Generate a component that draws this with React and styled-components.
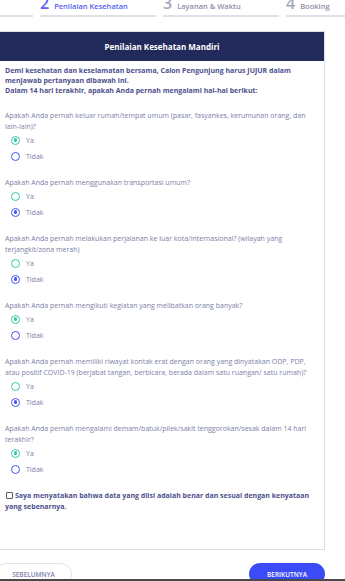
import React from "react";
import styled, { createGlobalStyle } from "styled-components";

const GlobalStyle = createGlobalStyle`
  html, body {
    margin: 0;
    padding: 0;
    background: #ffffff;
    overflow: hidden;
    font-family: "Open Sans", "Liberation Sans", sans-serif;
  }
`;

const questions = [
    {
        text: "Apakah Anda pernah keluar rumah/tempat umum (pasar, fasyankes, kerumunan orang, dan lain-lain)?",
        answer: "ya",
    },
    {
        text: "Apakah Anda pernah menggunakan transportasi umum?",
        answer: "tidak",
    },
    {
        text: "Apakah Anda pernah melakukan perjalanan ke luar kota/internasional? (wilayah yang terjangkit/zona merah)",
        answer: "tidak",
    },
    {
        text: "Apakah Anda pernah mengikuti kegiatan yang melibatkan orang banyak?",
        answer: "ya",
    },
    {
        text: "Apakah Anda pernah memiliki riwayat kontak erat dengan orang yang dinyatakan ODP, PDP, atau positif COVID-19 (berjabat tangan, berbicara, berada dalam satu ruangan/ satu rumah)?",
        answer: "tidak",
    },
    {
        text: "Apakah Anda pernah mengalami demam/batuk/pilek/sakit tenggorokan/sesak dalam 14 hari terakhir?",
        answer: "ya",
    },
];

const steps = [
    { num: 1, label: "Data Diri" },
    { num: 2, label: "Penilaian Kesehatan", active: true },
    { num: 3, label: "Layanan & Waktu" },
    { num: 4, label: "Booking" },
];

function App() {
    return (
        <>
            <GlobalStyle />
            <Page>
                <Stepper>
                    {steps.map((s) => (
                        <Step key={s.num}>
                            <StepNum $active={s.active}>{s.num}</StepNum>
                            <StepLabel $active={s.active}>{s.label}</StepLabel>
                        </Step>
                    ))}
                </Stepper>

                <Card>
                    <CardHeader>Penilaian Kesehatan Mandiri</CardHeader>
                    <CardBody>
                        <Intro>
                            Demi kesehatan dan keselamatan bersama, Calon Pengunjung harus JUJUR dalam
                            menjawab pertanyaan dibawah ini.
                            <br />
                            Dalam 14 hari terakhir, apakah Anda pernah mengalami hal-hal berikut:
                        </Intro>

                        {questions.map((q, i) => (
                            <Question key={i}>
                                <QuestionText>{q.text}</QuestionText>
                                <RadioRow>
                                    <Radio $color="#34c8a8" $checked={q.answer === "ya"} />
                                    <RadioLabel>Ya</RadioLabel>
                                </RadioRow>
                                <RadioRow>
                                    <Radio $color="#4454f0" $checked={q.answer === "tidak"} />
                                    <RadioLabel>Tidak</RadioLabel>
                                </RadioRow>
                            </Question>
                        ))}

                        <Agreement>
                            <CheckBox />
                            Saya menyatakan bahwa data yang diisi adalah benar dan sesuai dengan kenyataan
                            yang sebenarnya.
                        </Agreement>
                    </CardBody>
                </Card>

                <Actions>
                    <PrevButton>Sebelumnya</PrevButton>
                    <NextButton>Berikutnya</NextButton>
                </Actions>
            </Page>
            <FooterEdge />
        </>
    );
}

const Page = styled.div`
    width: 345px;
    padding-right: 20px;
    box-sizing: border-box;
`

const Stepper = styled.div`
    display: flex;
    gap: 7px;
    margin-top: -5px;
    margin-left: -83px;
`

const Step = styled.div`
    flex: 0 0 116px;
    display: flex;
    align-items: baseline;
    gap: 5px;
    padding-bottom: 4px;
    border-bottom: 2px solid #dfe0ea;
    white-space: nowrap;
`

const StepNum = styled.span`
    font-size: 16px;
    line-height: 16px;
    font-weight: 600;
    color: ${(p) => (p.$active ? "#5a66f2" : "#a3a5b8")};
`

const StepLabel = styled.span`
    font-size: 7.5px;
    font-weight: 600;
    color: ${(p) => (p.$active ? "#5560ee" : "#8d8fa6")};
`

const Card = styled.div`
    margin-top: 14px;
    width: 325px;
    box-sizing: border-box;
    border: 1px solid #dcdde6;
    border-left: none;
`

const CardHeader = styled.div`
    height: 29px;
    background: #222a5c;
    color: #ffffff;
    font-size: 8px;
    font-weight: 700;
    display: flex;
    align-items: center;
    justify-content: center;
`

const CardBody = styled.div`
    padding: 5px 10px 37px 5px;
`

const Intro = styled.p`
    margin: 0 0 14px;
    font-size: 7px;
    line-height: 10px;
    font-weight: 700;
    color: #4d508e;
`

const Question = styled.div`
    margin-bottom: 13px;
`

const QuestionText = styled.p`
    margin: 0;
    font-size: 7px;
    line-height: 11px;
    color: #7d80a8;
`

const RadioRow = styled.div`
    display: flex;
    align-items: center;
    height: 16px;
    gap: 6px;
    padding-left: 6px;
`

const Radio = styled.span`
    width: 9px;
    height: 9px;
    box-sizing: border-box;
    border-radius: 50%;
    border: 1.4px solid ${(p) => p.$color};
    display: flex;
    align-items: center;
    justify-content: center;

    &::after {
        content: "";
        display: ${(p) => (p.$checked ? "block" : "none")};
        width: 3.4px;
        height: 3.4px;
        border-radius: 50%;
        background: ${(p) => p.$color};
    }
`

const RadioLabel = styled.span`
    font-size: 7px;
    color: #7d80a8;
`

const Agreement = styled.p`
    margin: 0;
    font-size: 7px;
    line-height: 11px;
    font-weight: 700;
    color: #4d508e;
`

const CheckBox = styled.span`
    display: inline-block;
    width: 5px;
    height: 5px;
    border: 1px solid #5a5a6a;
    border-radius: 1px;
    margin: 0 2px 0 1px;
    vertical-align: -1px;
`

const Actions = styled.div`
    width: 325px;
    margin-top: 13px;
    display: flex;
    justify-content: space-between;
`

const PillButton = styled.button`
    height: 22px;
    border-radius: 11px;
    font-family: "Open Sans", "Liberation Sans", sans-serif;
    font-size: 6.5px;
    font-weight: 600;
    text-transform: uppercase;
    padding: 0;
    cursor: pointer;
`

const PrevButton = styled(PillButton)`
    width: 77px;
    margin-left: -5px;
    background: #ffffff;
    border: 1px solid #e3e3ec;
    color: #7b7eb0;
`

const NextButton = styled(PillButton)`
    width: 76px;
    background: #3b4cf6;
    border: none;
    color: #ffffff;
`

const FooterEdge = styled.div`
    position: fixed;
    left: 0;
    right: 0;
    bottom: 0;
    height: 2px;
    background: #4a4a4a;
`

export default App;
